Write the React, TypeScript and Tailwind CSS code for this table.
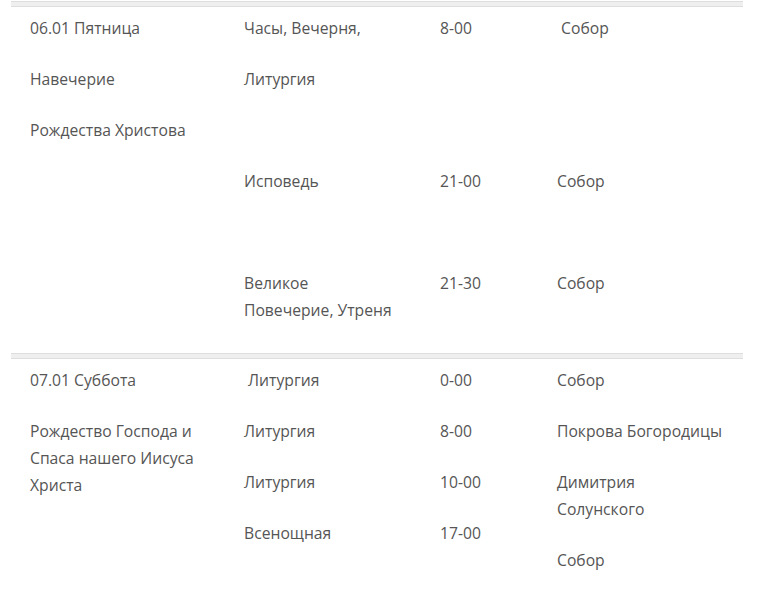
type Cell = string[];
type Row = [Cell, Cell, Cell, Cell];

const rows: Row[] = [
  [
    ["06.01 Пятница", "Навечерие", "Рождества Христова"],
    ["Часы, Вечерня,", "Литургия", "", "Исповедь", "", "Великое Повечерие, Утреня"],
    ["8-00", "", "", "21-00", "", "21-30"],
    ["\u00a0Собор", "", "", "Собор", "", "Собор"],
  ],
  [
    ["07.01 Суббота", "Рождество Господа и Спаса нашего Иисуса Христа"],
    ["\u00a0Литургия", "Литургия", "Литургия", "Всенощная"],
    ["0-00", "8-00", "10-00", "17-00"],
    ["Собор", "Покрова Богородицы", "Димитрия Солунского", "Собор"],
  ],
];

// content widths, tuned so the long lines wrap where the page does
const cellClass = [
  "pl-[19px] pr-[14px]",
  "pl-[19px] pr-[22px]",
  "pl-[19px] pr-2",
  "pl-[19px] pr-[18px]",
];

function Separator() {
  return <div className="h-[6px] border-y border-[#dedede] bg-[#efefef]" />;
}

export default function App() {
  return (
    <div className="min-h-[601px] bg-white pt-[1px] font-['Open_Sans',sans-serif] text-[15.7px] leading-[27px] text-[#555]">
      <div className="ml-[11px] w-[732px]">
        {rows.map((row, r) => (
          <div key={r}>
            <Separator />
            <div className="grid grid-cols-[214px_196px_117px_205px] pt-[8px] pb-[5px]">
              {row.map((cell, c) => (
                <div key={c} className={cellClass[c]}>
                  {cell.map((text, i) => (
                    <p key={i} className="mb-6">
                      {text || "\u00a0"}
                    </p>
                  ))}
                </div>
              ))}
            </div>
          </div>
        ))}
      </div>
    </div>
  );
}
